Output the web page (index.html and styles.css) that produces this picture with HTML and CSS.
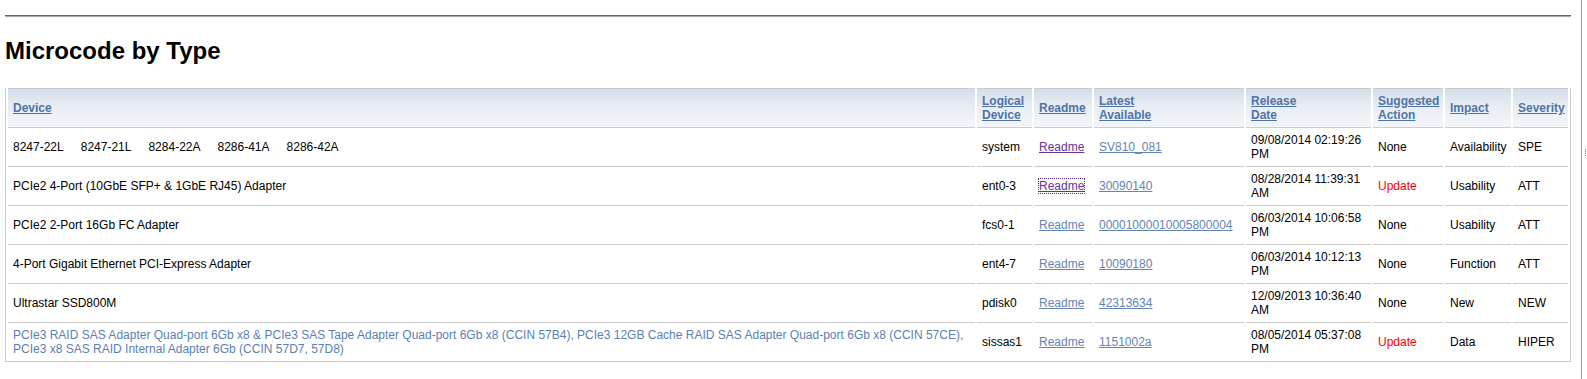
FILE: index.html
```html
<!DOCTYPE html>
<html>
<head>
<meta charset="utf-8">
<title>Microcode by Type</title>
<link rel="stylesheet" href="styles.css">
</head>
<body>
<div class="frame">
  <div class="content">
    <div class="rule"></div>
    <h2 class="title">Microcode by Type</h2>
    <table class="mc">
      <thead>
        <tr>
          <th class="c-device"><a href="#">Device</a></th>
          <th class="c-logical"><a href="#">Logical<br>Device</a></th>
          <th class="c-readme"><a href="#">Readme</a></th>
          <th class="c-latest"><a href="#">Latest<br>Available</a></th>
          <th class="c-release"><a href="#">Release<br>Date</a></th>
          <th class="c-action"><a href="#">Suggested<br>Action</a></th>
          <th class="c-impact"><a href="#">Impact</a></th>
          <th class="c-severity"><a href="#">Severity</a></th>
        </tr>
      </thead>
      <tbody>
        <tr>
          <td><span class="model">8247-22L</span><span class="model">8247-21L</span><span class="model">8284-22A</span><span class="model">8286-41A</span><span class="model">8286-42A</span></td>
          <td>system</td>
          <td><a href="#" class="visited">Readme</a></td>
          <td><a href="#">SV810_081</a></td>
          <td>09/08/2014 02:19:26 PM</td>
          <td>None</td>
          <td>Availability</td>
          <td>SPE</td>
        </tr>
        <tr>
          <td>PCIe2 4-Port (10GbE SFP+ &amp; 1GbE RJ45) Adapter</td>
          <td>ent0-3</td>
          <td><a href="#" class="visited focused">Readme</a></td>
          <td><a href="#">30090140</a></td>
          <td>08/28/2014 11:39:31 AM</td>
          <td class="update">Update</td>
          <td>Usability</td>
          <td>ATT</td>
        </tr>
        <tr>
          <td>PCIe2 2-Port 16Gb FC Adapter</td>
          <td>fcs0-1</td>
          <td><a href="#">Readme</a></td>
          <td><a href="#">00001000010005800004</a></td>
          <td>06/03/2014 10:06:58 PM</td>
          <td>None</td>
          <td>Usability</td>
          <td>ATT</td>
        </tr>
        <tr>
          <td>4-Port Gigabit Ethernet PCI-Express Adapter</td>
          <td>ent4-7</td>
          <td><a href="#">Readme</a></td>
          <td><a href="#">10090180</a></td>
          <td>06/03/2014 10:12:13 PM</td>
          <td>None</td>
          <td>Function</td>
          <td>ATT</td>
        </tr>
        <tr>
          <td>Ultrastar SSD800M</td>
          <td>pdisk0</td>
          <td><a href="#">Readme</a></td>
          <td><a href="#">42313634</a></td>
          <td>12/09/2013 10:36:40 AM</td>
          <td>None</td>
          <td>New</td>
          <td>NEW</td>
        </tr>
        <tr>
          <td class="muted">PCIe3 RAID SAS Adapter Quad-port 6Gb x8 &amp; PCIe3 SAS Tape Adapter Quad-port 6Gb x8 (CCIN 57B4), PCIe3 12GB Cache RAID SAS Adapter Quad-port 6Gb x8 (CCIN 57CE), PCIe3 x8 SAS RAID Internal Adapter 6Gb (CCIN 57D7, 57D8)</td>
          <td>sissas1</td>
          <td><a href="#">Readme</a></td>
          <td><a href="#">1151002a</a></td>
          <td>08/05/2014 05:37:08 PM</td>
          <td class="update">Update</td>
          <td>Data</td>
          <td>HIPER</td>
        </tr>
      </tbody>
    </table>
  </div>
  <div class="splitter"><span class="grip"></span></div>
</div>
</body>
</html>
```

FILE: styles.css
```css
html, body {
  margin: 0;
  padding: 0;
  background: #ffffff;
}

body {
  font-family: "Liberation Sans", Arial, sans-serif;
  font-size: 12px;
  color: #000;
}

.frame {
  display: flex;
  height: 379px;
}

.content {
  box-sizing: border-box;
  width: 1582px;
  padding: 0 10px 0 5px;
  border-right: 1px solid #9a9a9a;
  flex: none;
}

.rule {
  margin-top: 15px;
  height: 0;
  border-top: 1px solid #666;
  border-bottom: 1px solid #a8a8a8;
}

.title {
  margin: 20px 0 22px 0;
  font-size: 24px;
  line-height: 28px;
  font-weight: bold;
  color: #000;
}

.mc {
  width: 1566px;
  table-layout: fixed;
  border-collapse: separate;
  border-spacing: 2px 0;
  border: 1px solid #cccccc;
  border-top: 1px solid transparent;
}

.mc th,
.mc td {
  box-sizing: border-box;
  padding: 5px;
  line-height: 14px;
  text-align: left;
  vertical-align: middle;
  border-top: 1px solid #cccccc;
}

.mc th {
  font-weight: bold;
  background: linear-gradient(to bottom, #d3dde9 0%, #e8edf4 45%, #f4f6f9 100%);
}

.mc th a {
  color: #4f74a8;
  text-decoration: underline;
}

.mc td a {
  color: #6384b4;
  text-decoration: underline;
}

.mc td a.visited {
  color: #663399;
}

.mc td a.focused {
  outline: 1px dotted #552288;
  outline-offset: 0;
}

.c-device { width: 967px; }
.c-logical { width: 55px; }
.c-readme { width: 58px; }
.c-latest { width: 150px; }
.c-release { width: 125px; }
.c-action { width: 70px; }
.c-impact { width: 66px; }
.c-severity { width: 55px; }

.model {
  margin-right: 17px;
}

.update {
  color: #ff0000;
}

.muted {
  color: #5b7fb3;
}

.splitter {
  flex: 1;
  display: flex;
  align-items: flex-start;
}

.grip {
  display: block;
  width: 1px;
  height: 7px;
  margin: 149px 0 0 3px;
  background: repeating-linear-gradient(to bottom, #777 0, #777 1px, transparent 1px, transparent 2px);
}
```
